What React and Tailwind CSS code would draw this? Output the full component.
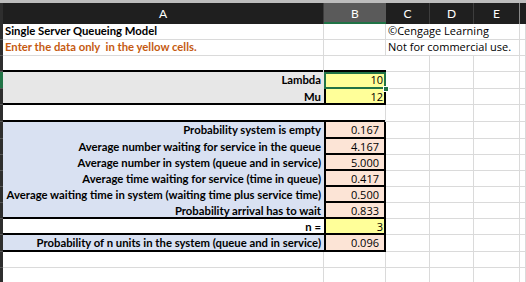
import React from 'react'

// Excel-like sheet: Single Server Queueing Model
const grid = 'border-r border-b border-[#dadada]'
const salmonBox = 'bg-[#fce4d6] shadow-[inset_2px_0_0_#000,inset_-2px_0_0_#000,inset_0_-2px_0_#000]'
const yellowBox = 'bg-[#ffff99] shadow-[inset_2px_0_0_#000,inset_-2px_0_0_#000,inset_0_-2px_0_#000]'
const label = "font-['Lato',sans-serif] font-bold text-[11.3px]"
const plain = "font-['Open_Sans',sans-serif] text-[11px]"

function Cell({ w, className = '', children }) {
  return (
    <div className={`${w} h-full shrink-0 flex items-center whitespace-nowrap box-border relative ${className}`}>
      {children}
    </div>
  )
}

function Stub({ active }) {
  return (
    <div
      className={`w-[3px] h-full shrink-0 box-border border-b border-[#555] ${
        active ? 'bg-[#217346]' : 'bg-[#2e2e2e]'
      }`}
    />
  )
}

function Rest() {
  return (
    <>
      <Cell w="w-[44px]" className={grid} />
      <Cell w="w-[44px]" className={grid} />
      <Cell w="w-[46px]" className={grid} />
      <div className={`flex-1 h-full box-border ${grid}`} />
    </>
  )
}

function Row({ h, children }) {
  return <div className={`flex ${h}`}>{children}</div>
}

const results = [
  ['Probability system is empty', '0.167', 'h-[17px]'],
  ['Average number waiting for service in the queue', '4.167', 'h-[16px]'],
  ['Average number in system (queue and in service)', '5.000', 'h-[16px]'],
  ['Average time waiting for service (time in queue)', '0.417', 'h-[16px]'],
  ['Average waiting time in system (waiting time plus service time)', '0.500', 'h-[16px]'],
  ['Probability arrival has to wait', '0.833', 'h-[16px]'],
]

export default function App() {
  return (
    <div className="w-[526px] h-[282px] overflow-hidden bg-white text-[11px] text-black font-['Lato',sans-serif]">
      {/* top strip */}
      <div className="h-[3px] bg-[#bdbdbd]" />

      {/* column headers */}
      <div className="flex h-[21px] bg-[#1f1f1f] text-white text-[12px]">
        <div className="w-[3px] shrink-0 bg-[#2e2e2e]" />
        <div className="w-[321px] shrink-0 flex items-center justify-center border-r border-[#3d3d3d]">A</div>
        <div className="w-[62px] shrink-0 flex items-center justify-center bg-[#5a5a5a] border-b-2 border-[#217346] box-border pt-[2px]">B</div>
        <div className="w-[44px] shrink-0 flex items-center justify-center border-r border-[#3d3d3d]">C</div>
        <div className="w-[44px] shrink-0 flex items-center justify-center border-r border-[#3d3d3d]">D</div>
        <div className="w-[46px] shrink-0 flex items-center justify-center border-r border-[#8a8a8a]">E</div>
        <div className="flex-1" />
      </div>

      {/* row 1 */}
      <Row h="h-[16px]">
        <Stub />
        <Cell w="w-[321px]" className={`${grid} ${label} pl-[2px]`}>Single Server Queueing Model</Cell>
        <Cell w="w-[62px]" className={grid} />
        <Cell w="w-[134px]" className={`${grid} ${plain} pl-[2px]`}>©Cengage Learning</Cell>
        <div className={`flex-1 h-full box-border ${grid}`} />
      </Row>

      {/* row 2 */}
      <Row h="h-[16px]">
        <Stub />
        <Cell w="w-[321px]" className={`${grid} ${label} pl-[2px] text-[#c55a11]`}>
          Enter the data only&nbsp; in the yellow cells.
        </Cell>
        <Cell w="w-[62px]" className={grid} />
        <Cell w="w-[134px]" className={`${grid} ${plain} pl-[2px]`}>Not for commercial use.</Cell>
        <div className={`flex-1 h-full box-border ${grid}`} />
      </Row>

      {/* row 3 */}
      <Row h="h-[16px]">
        <Stub />
        <Cell w="w-[321px]" className="border-r border-[#dadada] shadow-[inset_0_-2px_0_#000]" />
        <Cell w="w-[62px]" className="shadow-[inset_0_-2px_0_#000]" />
        <Rest />
      </Row>

      {/* Lambda */}
      <Row h="h-[17px]">
        <Stub active />
        <Cell w="w-[321px]" className={`bg-[#e7e7e7] justify-end pr-[3px] ${label}`}>Lambda</Cell>
        <Cell w="w-[62px]" className={`bg-[#ffff99] justify-end pr-[3px] ${plain} shadow-[inset_0_0_0_2px_#217346]`}>
          10
          <span className="absolute right-[-3px] bottom-[-3px] w-[6px] h-[6px] bg-[#217346] border border-white z-10" />
        </Cell>
        <Rest />
      </Row>

      {/* Mu */}
      <Row h="h-[16px]">
        <Stub />
        <Cell w="w-[321px]" className={`bg-[#e7e7e7] justify-end pr-[3px] ${label} shadow-[inset_0_-2px_0_#000]`}>Mu</Cell>
        <Cell w="w-[62px]" className={`${yellowBox} justify-end pr-[3px] ${plain}`}>12</Cell>
        <Rest />
      </Row>

      {/* blank */}
      <Row h="h-[17px]">
        <Stub />
        <Cell w="w-[321px]" className="shadow-[inset_0_-2px_0_#000]" />
        <Cell w="w-[62px]" className="border-r border-[#dadada] shadow-[inset_0_-2px_0_#000]" />
        <Rest />
      </Row>

      {/* results */}
      {results.map(([text, value, h], i) => (
        <Row key={text} h={h}>
          <Stub />
          <Cell
            w="w-[321px]"
            className={`bg-[#d9e1f2] justify-end pr-[3px] ${label} ${
              i === results.length - 1 ? 'shadow-[inset_0_-2px_0_#000]' : ''
            }`}
          >
            {text}
          </Cell>
          <Cell w="w-[62px]" className={`${salmonBox} justify-end pr-[7px] ${plain}`}>{value}</Cell>
          <Rest />
        </Row>
      ))}

      {/* n = */}
      <Row h="h-[16px]">
        <Stub />
        <Cell w="w-[321px]" className={`justify-end pr-[3px] ${label} shadow-[inset_0_-2px_0_#000]`}>n =</Cell>
        <Cell w="w-[62px]" className={`${yellowBox} justify-end pr-[3px] ${plain}`}>3</Cell>
        <Rest />
      </Row>

      {/* probability of n */}
      <Row h="h-[17px]">
        <Stub />
        <Cell w="w-[321px]" className={`bg-[#d9e1f2] justify-end pr-[3px] ${label} shadow-[inset_0_-2px_0_#000]`}>
          Probability of n units in the system (queue and in service)
        </Cell>
        <Cell w="w-[62px]" className={`${salmonBox} justify-end pr-[7px] ${plain}`}>0.096</Cell>
        <Rest />
      </Row>

      {/* trailing blank rows */}
      <Row h="h-[16px]">
        <Stub />
        <Cell w="w-[321px]" className={grid} />
        <Cell w="w-[62px]" className={grid} />
        <Rest />
      </Row>
      <Row h="h-[16px]">
        <Stub />
        <Cell w="w-[321px]" className={grid} />
        <Cell w="w-[62px]" className={grid} />
        <Rest />
      </Row>
    </div>
  )
}
